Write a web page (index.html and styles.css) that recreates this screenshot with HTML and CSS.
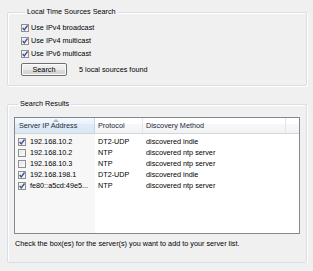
FILE: index.html
```html
<!DOCTYPE html>
<html>
<head>
<meta charset="utf-8">
<link rel="stylesheet" href="styles.css">
</head>
<body>
<div class="page">
  <fieldset class="group group-local">
    <legend class="group-title">Local Time Sources Search</legend>
    <div class="opts">
      <label class="opt"><span class="cb checked"><svg viewBox="0 0 8 8"><path d="M1.6 4 L3.3 6 L6.5 1.5"/></svg></span>Use IPv4 broadcast</label>
      <label class="opt"><span class="cb checked"><svg viewBox="0 0 8 8"><path d="M1.6 4 L3.3 6 L6.5 1.5"/></svg></span>Use IPv4 multicast</label>
      <label class="opt"><span class="cb checked"><svg viewBox="0 0 8 8"><path d="M1.6 4 L3.3 6 L6.5 1.5"/></svg></span>Use IPv6 multicast</label>
    </div>
    <div class="search-row">
      <button class="btn">Search</button>
      <span class="status">5 local sources found</span>
    </div>
  </fieldset>

  <fieldset class="group group-results">
    <legend class="group-title">Search Results</legend>
    <div class="list">
      <div class="list-head">
        <div class="hcell sorted"><span class="sort-arrow"></span>Server IP Address</div>
        <div class="hcell">Protocol</div>
        <div class="hcell">Discovery Method</div>
        <div class="hcell last"></div>
      </div>
      <div class="list-body">
        <div class="row">
          <div class="cell first"><span class="cb checked"><svg viewBox="0 0 8 8"><path d="M1.6 4 L3.3 6 L6.5 1.5"/></svg></span>192.168.10.2</div>
          <div class="cell">DT2-UDP</div>
          <div class="cell">discovered indie</div>
        </div>
        <div class="row">
          <div class="cell first"><span class="cb"></span>192.168.10.2</div>
          <div class="cell">NTP</div>
          <div class="cell">discovered ntp server</div>
        </div>
        <div class="row">
          <div class="cell first"><span class="cb"></span>192.168.10.3</div>
          <div class="cell">NTP</div>
          <div class="cell">discovered ntp server</div>
        </div>
        <div class="row">
          <div class="cell first"><span class="cb checked"><svg viewBox="0 0 8 8"><path d="M1.6 4 L3.3 6 L6.5 1.5"/></svg></span>192.168.198.1</div>
          <div class="cell">DT2-UDP</div>
          <div class="cell">discovered indie</div>
        </div>
        <div class="row">
          <div class="cell first"><span class="cb checked"><svg viewBox="0 0 8 8"><path d="M1.6 4 L3.3 6 L6.5 1.5"/></svg></span>fe80::a5cd:49e5...</div>
          <div class="cell">NTP</div>
          <div class="cell">discovered ntp server</div>
        </div>
      </div>
    </div>
    <p class="hint">Check the box(es) for the server(s) you want to add to your server list.</p>
  </fieldset>
</div>
</body>
</html>
```

FILE: styles.css
```css
html, body {
  margin: 0;
  padding: 0;
  background: #f0f0f0;
}
body {
  font-family: "Liberation Sans", Arial, sans-serif;
  font-size: 7.25px;
  color: #000;
}
.page {
  padding: 7px 6px 0 7px;
}
.group {
  margin: 0;
  border: 1px solid #d5dfe5;
  border-radius: 2px;
  box-shadow: inset 1px 1px 0 #fff, 1px 1px 0 #fff;
  padding: 0;
  min-width: 0;
}
.group-title {
  margin-left: 4px;
  padding: 0 2px;
  line-height: 10px;
  height: 10px;
}
.group-local {
  padding: 4px 0 9px 13px;
}
.opts {
  display: flex;
  flex-direction: column;
}
.opt {
  display: flex;
  align-items: center;
  height: 13px;
}
.cb {
  width: 8px;
  height: 8px;
  box-sizing: border-box;
  border: 1px solid #8f8f8f;
  background: linear-gradient(135deg, #dcdcdc 0%, #f4f4f4 60%, #ffffff 100%);
  box-shadow: inset 0 0 0 1px #f4f4f4;
  display: inline-flex;
  align-items: center;
  justify-content: center;
  margin-right: 2px;
  flex: none;
}
.cb svg {
  width: 8px;
  height: 8px;
  display: block;
  flex: none;
  margin: -1px;
}
.cb svg path {
  fill: none;
  stroke: #3c5090;
  stroke-width: 1.3;
}
.search-row {
  display: flex;
  align-items: center;
  margin-top: 3px;
  gap: 12px;
}
.btn {
  width: 46px;
  height: 13px;
  padding: 0;
  margin: 0;
  box-sizing: border-box;
  border: 1px solid #707070;
  border-radius: 2px;
  background: linear-gradient(#f2f2f2 0%, #ebebeb 50%, #dddddd 51%, #cfcfcf 100%);
  box-shadow: inset 0 0 0 1px #fcfcfc;
  font-family: inherit;
  font-size: 7.25px;
  line-height: 11px;
  color: #000;
}
.status {
  line-height: 13px;
}
.group-results {
  margin-top: 13px;
  padding: 8px 6px 13px 6px;
}
.list {
  border: 1px solid #828790;
  background: #fff;
  height: 115px;
  display: flex;
  flex-direction: column;
}
.list-head {
  display: grid;
  grid-template-columns: 80px 48px 143px 1fr;
  height: 15px;
  border-bottom: 1px solid #d5d5d5;
  background: linear-gradient(#ffffff 0%, #ffffff 40%, #f7f8fa 41%, #f1f2f4 100%);
}
.hcell {
  position: relative;
  border-right: 1px solid #e3e6ea;
  padding-left: 3px;
  line-height: 15px;
  color: #1f2a3a;
  white-space: nowrap;
  overflow: hidden;
}
.hcell.sorted {
  padding-left: 4px;
  background: linear-gradient(#f4f9fd 0%, #eaf3fb 40%, #dfecf8 41%, #d9e8f6 100%);
  border-right-color: #c4d8ec;
}
.hcell.last {
  border-right: none;
}
.sort-arrow {
  position: absolute;
  left: 38px;
  top: 1px;
  width: 0;
  height: 0;
  border-left: 3px solid transparent;
  border-right: 3px solid transparent;
  border-bottom: 3px solid #a4b5c8;
}
.list-body {
  flex: 1;
  padding-top: 2px;
  background: linear-gradient(to right, #f7f7f7 80px, #ffffff 80px);
}
.row {
  display: grid;
  grid-template-columns: 80px 48px 143px;
  height: 11px;
  align-items: center;
}
.cell {
  padding-left: 3px;
  white-space: nowrap;
  overflow: hidden;
  line-height: 11px;
  color: #000;
}
.cell.first {
  display: flex;
  align-items: center;
  padding-left: 3px;
}
.cell.first .cb {
  margin-right: 4px;
}
.hint {
  margin: 5px 0 0 1px;
  line-height: 10px;
  color: #000;
}
```
